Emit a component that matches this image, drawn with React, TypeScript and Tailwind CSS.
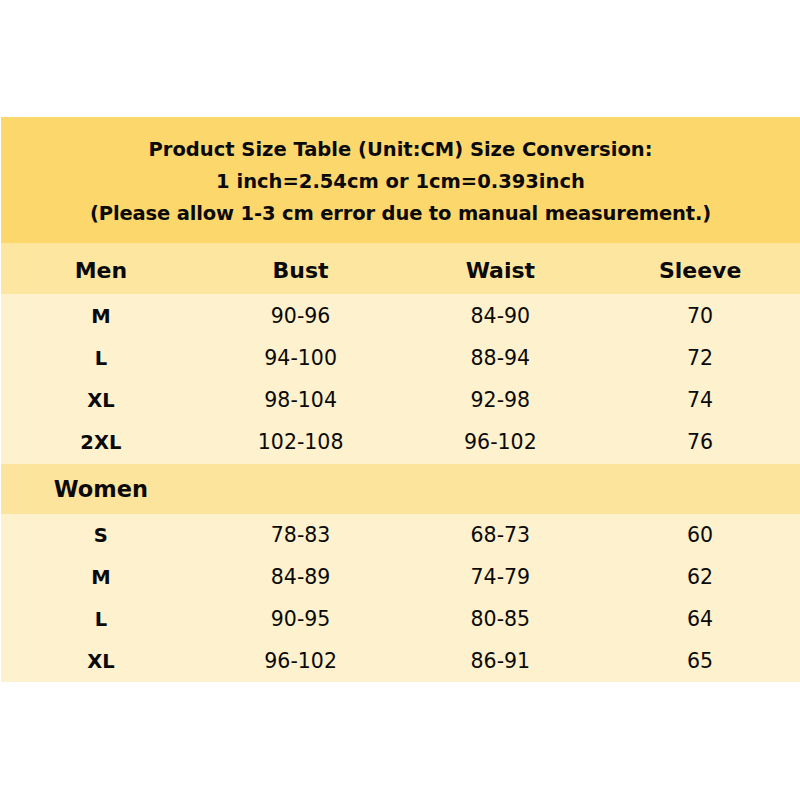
const men = [
  ["M", "90-96", "84-90", "70"],
  ["L", "94-100", "88-94", "72"],
  ["XL", "98-104", "92-98", "74"],
  ["2XL", "102-108", "96-102", "76"],
];

const women = [
  ["S", "78-83", "68-73", "60"],
  ["M", "84-89", "74-79", "62"],
  ["L", "90-95", "80-85", "64"],
  ["XL", "96-102", "86-91", "65"],
];

const DataRow = ({ row }: { row: string[] }) => (
  <div className="grid grid-cols-4 h-[42px] items-center text-center text-[20.5px] text-[#0a0a0a] pt-px">
    <span className="font-bold text-[19.5px]">{row[0]}</span>
    <span>{row[1]}</span>
    <span>{row[2]}</span>
    <span>{row[3]}</span>
  </div>
);

export default function App() {
  return (
    <div className="w-[800px] h-[800px] bg-white pt-[117px] font-['DejaVu_Sans',sans-serif]">
      <div className="ml-px">
        <div className="h-[126px] bg-[#fbd76c] flex flex-col items-center justify-center text-[19.5px] font-bold leading-[32px] text-[#0a0a0a] pt-[3px]">
          <p>Product Size Table (Unit:CM) Size Conversion:</p>
          <p>1 inch=2.54cm or 1cm=0.393inch</p>
          <p className="tracking-[-0.15px]">(Please allow 1-3 cm error due to manual measurement.)</p>
        </div>

        <div className="h-[51px] bg-[#fde6a0] grid grid-cols-4 items-center text-center text-[22px] font-bold text-[#0a0a0a] pt-[3px]">
          <span>Men</span>
          <span>Bust</span>
          <span>Waist</span>
          <span>Sleeve</span>
        </div>

        <div className="bg-[#fef1cd] py-px">
          {men.map((r) => (
            <DataRow key={r[0]} row={r} />
          ))}
        </div>

        <div className="h-[50px] bg-[#fde49d] grid grid-cols-4 items-center text-center text-[22.5px] font-bold text-[#0a0a0a] pt-[2px]">
          <span>Women</span>
        </div>

        <div className="bg-[#fef1cd]">
          {women.map((r) => (
            <DataRow key={r[0]} row={r} />
          ))}
        </div>
      </div>
    </div>
  );
}
